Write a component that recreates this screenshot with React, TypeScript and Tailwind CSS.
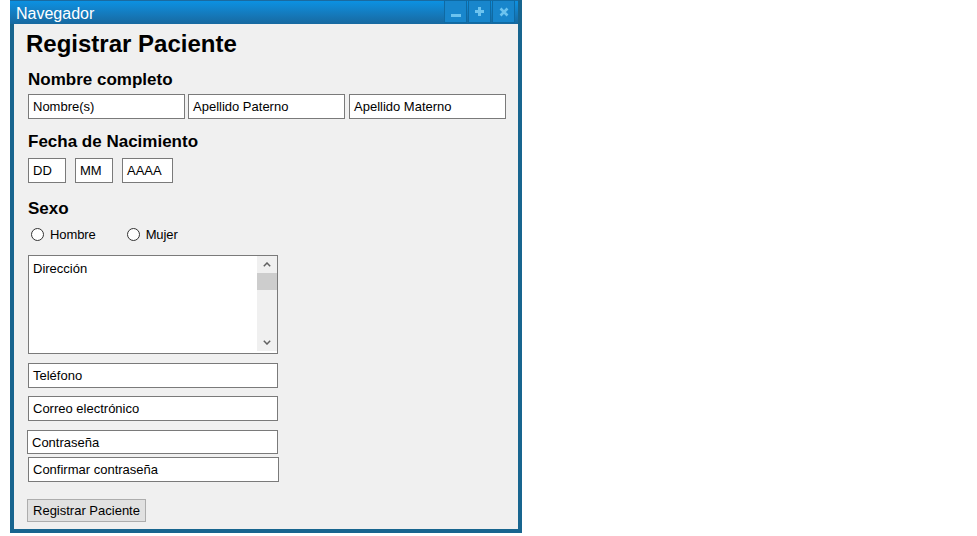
import React from "react";

const Field = ({ label, className }: { label: string; className: string }) => (
  <div
    className={`h-[25px] bg-white border border-[#7a7a7a] pl-[4px] flex items-center text-[13px] leading-none text-black whitespace-nowrap ${className}`}
  >
    {label}
  </div>
);

const Radio = ({ label }: { label: string }) => (
  <div className="flex items-center h-[16px]">
    <div className="w-[13px] h-[13px] rounded-full border border-[#333] bg-white" />
    <span className="ml-[6px] text-[13px] leading-none tracking-[-0.1px]">{label}</span>
  </div>
);

export default function App() {
  return (
    <div className="w-[977px] h-[536px] bg-white font-['Liberation_Sans',Arial,sans-serif] text-black">
      <div className="ml-[10px] w-[512px] h-[533px] bg-[#18658f] flex flex-col">
        {/* Title bar */}
        <div className="h-[24px] mr-[4px] flex items-start bg-gradient-to-b from-[#0b91e2] to-[#1769a0] border-t border-[#1a6aa0]">
          <div className="pl-[6px] pt-[1px] text-[16px] leading-[24px] text-white">Navegador</div>
          <div className="ml-auto mr-[3px] flex gap-[1px] -mt-[1px]">
            <div className="w-[23px] h-[23px] bg-[#1886cc] border border-[#0f6aa3] flex items-end justify-center pb-[5px]">
              <svg width="10" height="3" viewBox="0 0 10 3">
                <rect x="0" y="0" width="10" height="3" fill="#6cc3ef" />
              </svg>
            </div>
            <div className="w-[23px] h-[23px] bg-[#1886cc] border border-[#0f6aa3] flex items-center justify-center">
              <svg width="9" height="9" viewBox="0 0 9 9">
                <rect x="3" y="0" width="3" height="9" fill="#6cc3ef" />
                <rect x="0" y="3" width="9" height="3" fill="#6cc3ef" />
              </svg>
            </div>
            <div className="w-[23px] h-[23px] bg-[#1886cc] border border-[#0f6aa3] flex items-center justify-center">
              <svg width="10" height="10" viewBox="0 0 10 10">
                <path d="M1.5 1.5 L8.5 8.5 M8.5 1.5 L1.5 8.5" stroke="#6cc3ef" strokeWidth="2.6" />
              </svg>
            </div>
          </div>
        </div>

        {/* Content */}
        <div className="flex-1 mx-[4px] mb-[4px] bg-[#f0f0f0] pl-[14px] flex flex-col items-start">
          <h1 className="mt-[6px] h-[28px] -ml-[2px] text-[24px] leading-[28px] font-bold">Registrar Paciente</h1>

          <h2 className="mt-[12px] h-[20px] text-[17px] leading-[20px] font-bold">Nombre completo</h2>
          <div className="mt-[4px] flex">
            <Field label="Nombre(s)" className="w-[157px]" />
            <Field label="Apellido Paterno" className="w-[157px] ml-[3px]" />
            <Field label="Apellido Materno" className="w-[157px] ml-[4px]" />
          </div>

          <h2 className="mt-[13px] h-[20px] text-[17px] leading-[20px] font-bold">Fecha de Nacimiento</h2>
          <div className="mt-[6px] flex">
            <Field label="DD" className="w-[38px]" />
            <Field label="MM" className="w-[38px] ml-[9px]" />
            <Field label="AAAA" className="w-[51px] ml-[9px]" />
          </div>

          <h2 className="mt-[16px] h-[20px] text-[17px] leading-[20px] font-bold">Sexo</h2>
          <div className="mt-[7px] flex pl-[3px]">
            <Radio label="Hombre" />
            <div className="ml-[31px]">
              <Radio label="Mujer" />
            </div>
          </div>

          <div className="mt-[13px] w-[250px] h-[99px] bg-white border border-[#7a7a7a] flex">
            <div className="flex-1 pl-[4px] pt-[5px] text-[13px] leading-[15px]">Dirección</div>
            <div className="w-[20px] mb-[2px] bg-[#f0f0f0] flex flex-col items-center">
              <div className="h-[17px] flex items-center justify-center">
                <svg width="8" height="5" viewBox="0 0 8 5">
                  <path d="M0.8 4.2 L4 1 L7.2 4.2" stroke="#606060" strokeWidth="1.5" fill="none" />
                </svg>
              </div>
              <div className="w-full h-[17px] bg-[#cdcdcd]" />
              <div className="flex-1" />
              <div className="h-[17px] flex items-center justify-center">
                <svg width="8" height="5" viewBox="0 0 8 5">
                  <path d="M0.8 0.8 L4 4 L7.2 0.8" stroke="#606060" strokeWidth="1.5" fill="none" />
                </svg>
              </div>
            </div>
          </div>

          <Field label="Teléfono" className="mt-[9px] w-[250px]" />
          <Field label="Correo electrónico" className="mt-[8px] w-[250px]" />
          <Field label="Contraseña" className="mt-[9px] -ml-[1px] w-[251px] !h-[24px]" />
          <Field label="Confirmar contraseña" className="mt-[3px] w-[251px]" />

          <button className="mt-[17px] -ml-[1px] w-[119px] h-[23px] bg-[#e1e1e1] border border-[#adadad] text-[13px] leading-none text-black">
            Registrar Paciente
          </button>
        </div>
      </div>
    </div>
  );
}
